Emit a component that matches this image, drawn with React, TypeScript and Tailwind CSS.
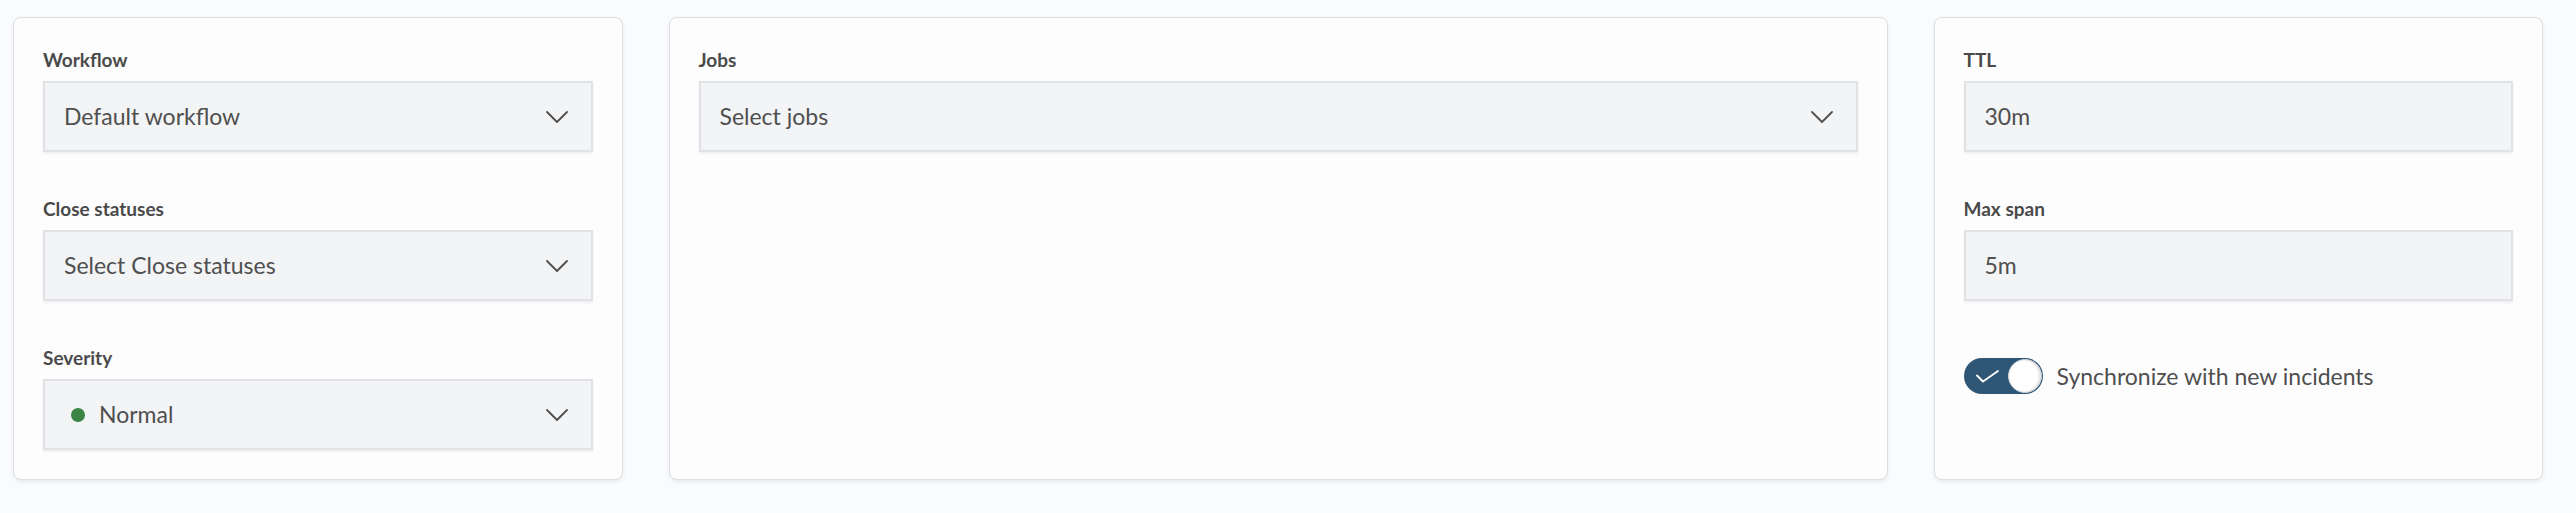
import type { ReactNode } from "react";

const FONT = "font-['Lato','Noto_Sans',sans-serif]";

function Chevron() {
  return (
    <svg width="22" height="12" viewBox="0 0 22 12" fill="none" className="shrink-0">
      <path d="M1 1l10 10L21 1" stroke="#4f4f4f" strokeWidth="1.8" strokeLinecap="round" strokeLinejoin="round" />
    </svg>
  );
}

function Field({ label, children, className = "" }: { label: string; children: ReactNode; className?: string }) {
  return (
    <div className={className}>
      <div className="mb-[9px] text-[19px] leading-[25px] font-bold text-[#4a4a4a]">{label}</div>
      {children}
    </div>
  );
}

function Box({ children, chevron }: { children: ReactNode; chevron?: boolean }) {
  return (
    <div className="flex h-[71px] items-center justify-between border-2 border-[#e1e2e6] bg-[#f3f4f6] pl-[19px] pr-[23px] shadow-[0_2px_2px_rgba(0,0,0,0.05)]">
      <div className="flex items-center text-[23px] text-[#4f4f4f]">{children}</div>
      {chevron && <Chevron />}
    </div>
  );
}

function Card({ children }: { children: ReactNode }) {
  return (
    <div className="rounded-[8px] border border-[#dcdee2] bg-[#fdfdfe] p-[29px] shadow-[0_2px_4px_rgba(0,0,0,0.07)]">
      {children}
    </div>
  );
}

function Toggle() {
  return (
    <div className="flex h-[36px] w-[79px] items-center justify-between rounded-full bg-[#2f5775] pl-[12px] pr-[1px]">
      <svg width="23" height="13" viewBox="0 0 23 13" fill="none">
        <path d="M1 5.5l6 6L22 1" stroke="#ffffff" strokeWidth="1.8" strokeLinecap="round" strokeLinejoin="round" />
      </svg>
      <div className="h-[34px] w-[34px] rounded-full border border-[#c9ced4] bg-white shadow-[inset_-2px_0_2px_rgba(0,0,0,0.12)]" />
    </div>
  );
}

export default function App() {
  return (
    <div className={`${FONT} min-h-[513px] bg-[#fafbfc] pl-[13px] pr-[33px] pt-[17px]`}>
      <div className="grid grid-cols-[1fr_2fr_1fr] items-stretch gap-[46px]">
        <Card>
          <Field label="Workflow">
            <Box chevron>Default workflow</Box>
          </Field>
          <Field label="Close statuses" className="mt-[44px]">
            <Box chevron>Select Close statuses</Box>
          </Field>
          <Field label="Severity" className="mt-[44px]">
            <Box chevron>
              <span className="mr-[14px] ml-[7px] h-[14px] w-[14px] rounded-full bg-[#3a8446]" />
              Normal
            </Box>
          </Field>
        </Card>

        <Card>
          <Field label="Jobs">
            <Box chevron>Select jobs</Box>
          </Field>
        </Card>

        <Card>
          <Field label="TTL">
            <Box>30m</Box>
          </Field>
          <Field label="Max span" className="mt-[44px]">
            <Box>5m</Box>
          </Field>
          <div className="mt-[57px] flex items-center gap-[14px]">
            <Toggle />
            <span className="text-[23px] text-[#4f4f4f]">Synchronize with new incidents</span>
          </div>
        </Card>
      </div>
    </div>
  );
}
